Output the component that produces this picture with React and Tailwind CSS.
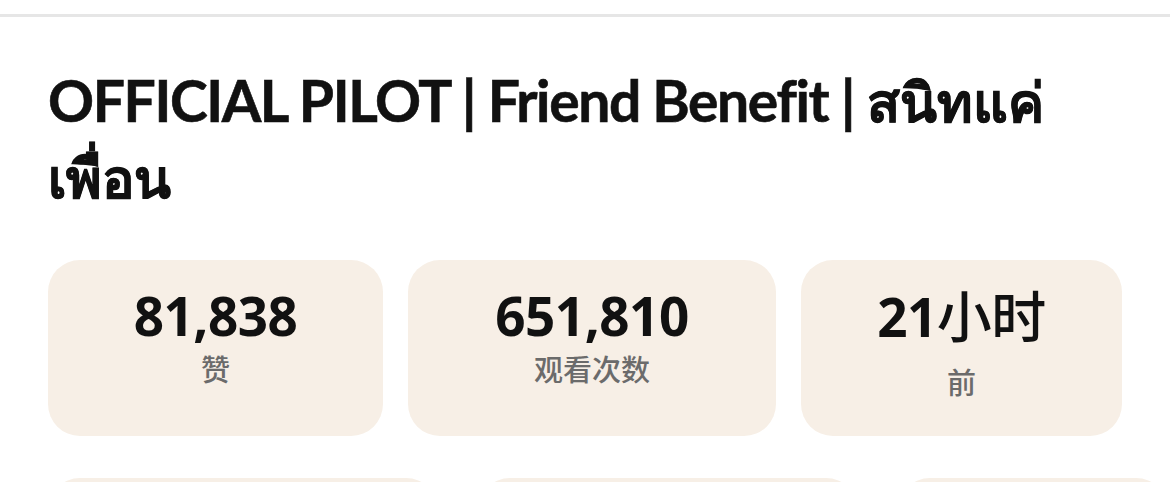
import React from 'react';

const stats = [
    { value: '81,838', label: '赞', width: 'w-[335px]', labelClass: 'mt-[6px]' },
    { value: '651,810', label: '观看次数', width: 'w-[368px]', labelClass: 'mt-[6px]' },
    { value: '21', unit: '小时', label: '前', width: 'w-[321px]', labelClass: 'mt-[18px]' },
];

const StatCard = ({ value, unit, label, width, labelClass }) => (
    <div className={`${width} h-[176px] shrink-0 rounded-[32px] bg-[#f7efe6] flex flex-col items-center pt-[26px]`}>
        <div className="text-[53px] leading-[60px] font-bold text-[#111111] tracking-[-0.5px]">
            {value}
            {unit && <span className="text-[55px] font-medium">{unit}</span>}
        </div>
        <div className={`${labelClass} text-[29px] leading-[36px] font-medium text-[#6b6b6b]`}>{label}</div>
    </div>
);

const App = () => {
    return (
        <div
            className="w-[1170px] h-[482px] overflow-hidden bg-white"
            style={{ fontFamily: '"Noto Sans", "Noto Sans Thai", "Noto Sans CJK SC", sans-serif' }}
        >
            {/* top divider */}
            <div className="h-[14px]" />
            <div className="h-[3px] bg-[#e6e6e6]" />

            <div className="px-[48px]">
                {/* Title */}
                <h1
                    className="mt-[46px] w-[1060px] text-[57px] leading-[74px] font-bold tracking-[-1.4px] text-[#111111] [-webkit-text-stroke:0.6px_#111111]"
                    style={{ fontFamily: 'Lato, "Noto Sans", sans-serif' }}
                >
                    OFFICIAL PILOT | Friend Benefit | <span className="whitespace-nowrap text-[54px] tracking-normal">สนิทแค่</span> <span className="text-[54px] tracking-normal">เพื่อน</span>
                </h1>

                {/* Stats row */}
                <div className="mt-[45px] flex gap-[25px]">
                    {stats.map((s) => (
                        <StatCard key={s.label} {...s} />
                    ))}
                </div>

                {/* Next row, partly off screen */}
                <div className="mt-[42px] flex gap-[40px]">
                    <div className="w-[390px] h-[176px] shrink-0 rounded-[32px] bg-[#f7efe6]" />
                    <div className="w-[380px] h-[176px] shrink-0 rounded-[32px] bg-[#f7efe6]" />
                    <div className="w-[270px] h-[176px] shrink-0 rounded-[32px] bg-[#f7efe6]" />
                </div>
            </div>
        </div>
    );
};

export default App;
